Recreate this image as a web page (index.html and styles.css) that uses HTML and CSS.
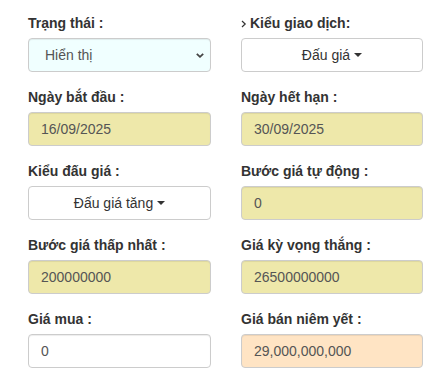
FILE: index.html
```html
<!DOCTYPE html>
<html lang="vi">
<head>
<meta charset="utf-8">
<title>Form</title>
<link rel="stylesheet" href="styles.css">
</head>
<body>
<div class="form">
  <div class="group">
    <label class="lbl">Trạng thái :</label>
    <div class="ctrl select"><span>Hiển thị</span><svg class="chev" width="8" height="5" viewBox="0 0 8 5"><path d="M0.8 0.8 L4 3.8 L7.2 0.8" fill="none" stroke="#444" stroke-width="1.8"/></svg></div>
  </div>
  <div class="group">
    <label class="lbl"><svg class="angle" width="6" height="8" viewBox="0 0 6 8"><path d="M1 1 L4.2 4 L1 7" fill="none" stroke="#333" stroke-width="1.2"/></svg>Kiểu giao dịch:</label>
    <div class="ctrl btn">Đấu giá <span class="caret"></span></div>
  </div>
  <div class="group">
    <label class="lbl">Ngày bắt đầu :</label>
    <div class="ctrl khaki">16/09/2025</div>
  </div>
  <div class="group">
    <label class="lbl">Ngày hết hạn :</label>
    <div class="ctrl khaki">30/09/2025</div>
  </div>
  <div class="group">
    <label class="lbl">Kiểu đấu giá :</label>
    <div class="ctrl btn">Đấu giá tăng <span class="caret"></span></div>
  </div>
  <div class="group">
    <label class="lbl">Bước giá tự động :</label>
    <div class="ctrl khaki">0</div>
  </div>
  <div class="group">
    <label class="lbl">Bước giá thấp nhất :</label>
    <div class="ctrl khaki">200000000</div>
  </div>
  <div class="group">
    <label class="lbl">Giá kỳ vọng thắng :</label>
    <div class="ctrl khaki">26500000000</div>
  </div>
  <div class="group">
    <label class="lbl">Giá mua :</label>
    <div class="ctrl">0</div>
  </div>
  <div class="group">
    <label class="lbl">Giá bán niêm yết :</label>
    <div class="ctrl peach">29,000,000,000</div>
  </div>
</div>
</body>
</html>
```

FILE: styles.css
```css
* { box-sizing: border-box; }
body {
  margin: 0;
  background: #fff;
  font-family: "Liberation Sans", Arial, sans-serif;
  font-size: 14px;
  line-height: 20px;
  color: #333;
}
.form {
  display: grid;
  grid-template-columns: 183px 182px;
  column-gap: 30px;
  row-gap: 15px;
  padding: 13px 24px 0 28px;
}
.lbl {
  display: flex;
  align-items: center;
  font-weight: bold;
  margin-bottom: 5px;
  height: 20px;
  color: #333;
}
.angle { margin-right: 3px; margin-top: 1px; }
.ctrl {
  height: 34px;
  padding: 6px 12px;
  border: 1px solid #ccc;
  border-radius: 4px;
  background: #fff;
  color: #555;
  box-shadow: inset 0 1px 1px rgba(0,0,0,.075);
  display: flex;
  align-items: center;
}
.select {
  background: #f0ffff;
  padding-left: 16px;
  padding-right: 6px;
  justify-content: space-between;
}
.chev { margin-top: 1px; }
.btn {
  justify-content: center;
  color: #333;
  box-shadow: none;
}
.caret {
  display: inline-block;
  width: 0;
  height: 0;
  margin-left: 4px;
  border-top: 4px solid #333;
  border-left: 4px solid transparent;
  border-right: 4px solid transparent;
}
.khaki { background: #eee8aa; }
.peach { background: #ffe4c4; }
```
